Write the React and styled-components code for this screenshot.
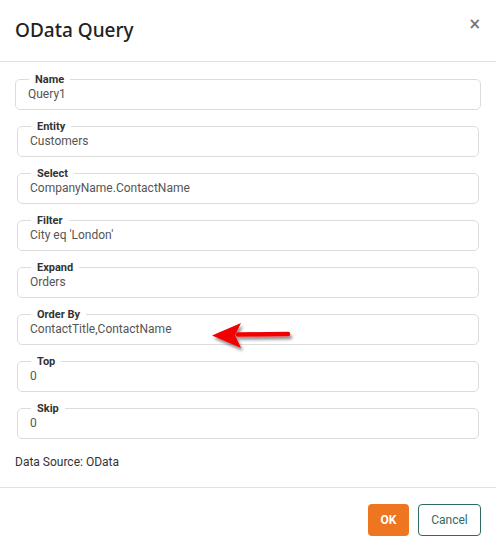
import React from 'react';
import styled, { createGlobalStyle } from 'styled-components';

const GlobalStyle = createGlobalStyle`
	html, body {
		margin: 0;
		padding: 0;
		background: #ffffff;
	}
	body {
		font-family: Roboto, "Liberation Sans", sans-serif;
		color: #333;
	}
`;

const fields = [
	{ label: 'Name', value: 'Query1', wide: true },
	{ label: 'Entity', value: 'Customers' },
	{ label: 'Select', value: 'CompanyName.ContactName' },
	{ label: 'Filter', value: "City eq 'London'" },
	{ label: 'Expand', value: 'Orders' },
	{ label: 'Order By', value: 'ContactTitle,ContactName', arrow: true },
	{ label: 'Top', value: '0' },
	{ label: 'Skip', value: '0' },
];

function RedArrow() {
	return (
		<ArrowWrap>
			<svg width="90" height="34" viewBox="0 0 90 34">
				<defs>
					<filter id="shade" x="-20%" y="-40%" width="140%" height="180%">
						<feDropShadow dx="2" dy="3" stdDeviation="1.6" floodColor="#000" floodOpacity="0.45" />
					</filter>
				</defs>
				<g filter="url(#shade)">
					<line x1="30" y1="15.5" x2="80" y2="15" stroke="#f20000" strokeWidth="4.5" strokeLinecap="round" />
					<path d="M4 16.5 L33 4 L27 16 L33 29 Z" fill="#f20000" />
				</g>
			</svg>
		</ArrowWrap>
	);
}

export default function App() {
	return (
		<React.Fragment>
			<GlobalStyle />
			<Dialog>
				<Header>
					<Title>OData Query</Title>
					<Close aria-label="close">×</Close>
				</Header>
				<Body>
					{fields.map((f) => (
						<Field key={f.label} wide={f.wide}>
							<Legend>{f.label}</Legend>
							<Value>{f.value}</Value>
							{f.arrow && <RedArrow />}
						</Field>
					))}
					<Source>Data Source: OData</Source>
				</Body>
				<Footer>
					<OkButton>OK</OkButton>
					<CancelButton>Cancel</CancelButton>
				</Footer>
			</Dialog>
		</React.Fragment>
	);
}

const Dialog = styled.div`
	width: 496px;
	height: 552px;
	box-sizing: border-box;
	background: #fff;
	display: flex;
	flex-direction: column;
	border-radius: 0 0 6px 6px;
`;

const Header = styled.div`
	height: 62px;
	box-sizing: border-box;
	border-bottom: 1px solid #e2e2e2;
	display: flex;
	align-items: center;
	justify-content: space-between;
	padding: 0 15px 0 15px;
`;

const Title = styled.h1`
	margin: 0;
	margin-top: -2px;
	font-family: "Noto Sans", "Open Sans", sans-serif;
	font-weight: 500;
	font-size: 19px;
	color: #222;
`;

const Close = styled.span`
	font-family: "DejaVu Sans", sans-serif;
	font-size: 15px;
	font-weight: bold;
	color: #777;
	margin-top: -13px;
	margin-right: 0;
`;

const Body = styled.div`
	padding: 11px 0 0 0;
	display: flex;
	flex-direction: column;
	gap: 10px;
	flex: 1;
`;

const Field = styled.fieldset`
	position: relative;
	margin: 0 ${(p) => (p.wide ? '15px' : '17px')};
	padding: 0 12px 7px;
	border: 1px solid #dcdcdc;
	border-radius: 5px;
	min-width: 0;
`;

const Legend = styled.legend`
	margin-left: 1px;
	padding: 0 6px;
	font-size: 11px;
	line-height: 13px;
	font-weight: 700;
	color: #333;
`;

const Value = styled.div`
	font-size: 12px;
	line-height: 16px;
	color: #555;
`;

const ArrowWrap = styled.div`
	position: absolute;
	left: 190px;
	top: -2px;
	line-height: 0;
`;

const Source = styled.div`
	margin: 6px 15px 0;
	font-size: 12px;
	color: #333;
`;

const Footer = styled.div`
	height: 65px;
	box-sizing: border-box;
	border-top: 1px solid #e2e2e2;
	display: flex;
	justify-content: flex-end;
	align-items: flex-start;
	gap: 9px;
	padding: 16px 15px 0 0;
`;

const OkButton = styled.button`
	height: 32px;
	width: 41px;
	border: none;
	border-radius: 4px;
	background: #ee7621;
	color: #fff;
	font-family: Roboto, sans-serif;
	font-weight: 700;
	font-size: 12px;
	padding: 0;
`;

const CancelButton = styled.button`
	height: 32px;
	width: 63px;
	border: 1px solid #2e6b62;
	border-radius: 4px;
	background: #fff;
	color: #2e6b62;
	font-family: Roboto, sans-serif;
	font-size: 12px;
	padding: 0;
`;
